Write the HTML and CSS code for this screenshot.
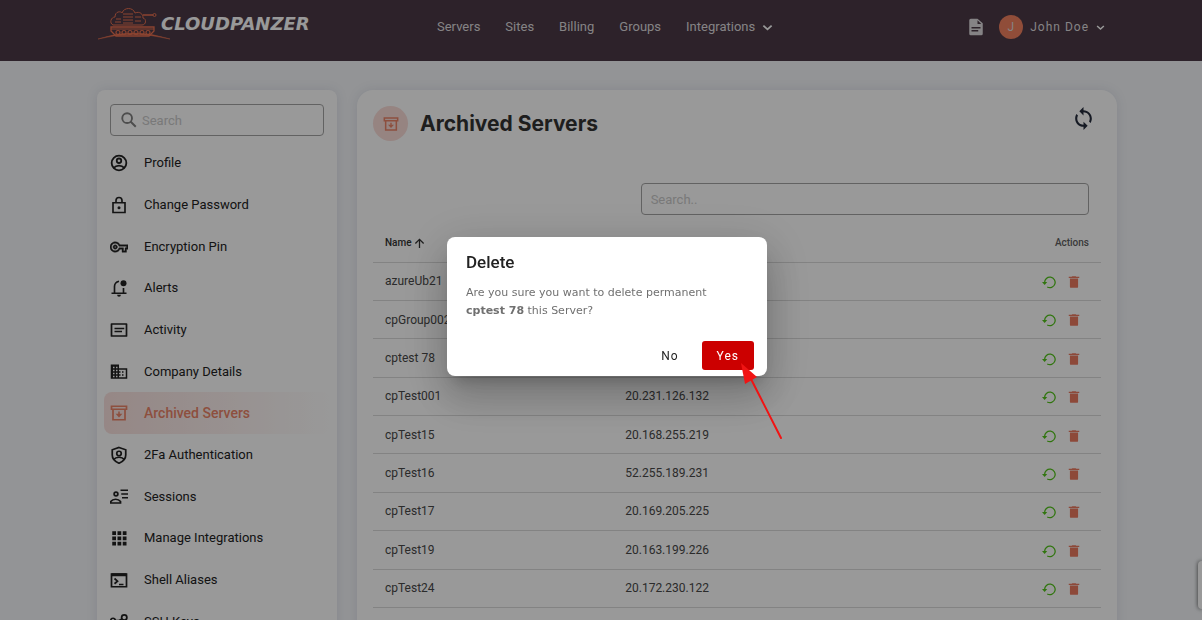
FILE: index.html
```html
<!DOCTYPE html>
<html lang="en">
<head>
<meta charset="utf-8">
<meta name="viewport" content="width=device-width, initial-scale=1">
<title>Archived Servers</title>
<link rel="stylesheet" href="styles.css">
</head>
<body>
<svg class="sprite" aria-hidden="true">
  <symbol id="i-user" viewBox="0 0 24 24"><g fill="none" stroke="currentColor" stroke-width="2.400"><circle cx="12" cy="12" r="9.800"/><circle cx="12" cy="9" r="3"/><path d="M5 18.500c3.500-4 10.500-4 14 0"/></g></symbol>
  <symbol id="i-lock" viewBox="0 0 24 24"><g fill="none" stroke="currentColor" stroke-width="2.200"><path d="M4 9h16v13H4zM8 9V6a4 4 0 0 1 8 0v3"/></g><circle cx="12" cy="15.500" r="2" fill="currentColor"/></symbol>
  <symbol id="i-key" viewBox="0 0 24 24"><path fill="currentColor" stroke="currentColor" stroke-width=".5" d="M22 19h-6v-4h-2.680c-1.140 2.420-3.600 4-6.320 4-3.860 0-7-3.140-7-7s3.140-7 7-7c2.720 0 5.170 1.580 6.320 4H24v6h-2v4zm-4-2h2v-4h2v-2H11.940l-.23-.67C11.010 8.340 9.110 7 7 7c-2.760 0-5 2.240-5 5s2.240 5 5 5c2.110 0 4.010-1.340 4.710-3.330l.23-.67H18v4zM7 15c-1.650 0-3-1.350-3-3s1.350-3 3-3 3 1.350 3 3-1.350 3-3 3zm0-4c-.55 0-1 .45-1 1s.45 1 1 1 1-.45 1-1-.45-1-1-1z"/></symbol>
  <symbol id="i-bell" viewBox="0 0 24 24"><path fill="none" stroke="currentColor" stroke-width="2.200" d="M2 19h20M6 19V10c0-3 2-6 6-7M18 19v-7"/><path fill="currentColor" d="M9.500 21h5a2.500 2.500 0 0 1-5 0z"/><circle cx="18" cy="5.500" r="4" fill="currentColor"/></symbol>
  <symbol id="i-list" viewBox="0 0 24 24"><path fill="none" stroke="currentColor" stroke-width="2.300" stroke-linejoin="round" d="M2 4h20v16H2zM6 10h13M6 14h10"/></symbol>
  <symbol id="i-building" viewBox="0 0 24 24"><path fill="currentColor" d="M12 7V2H1v19h22V7H12zM6 19H4v-2h2v2zm0-4H4v-2h2v2zm0-4H4V9h2v2zm0-4H4V5h2v2zm4 12H8v-2h2v2zm0-4H8v-2h2v2zm0-4H8V9h2v2zm0-4H8V5h2v2zm11 12h-9v-2h2v-2h-2v-2h2v-2h-2V9h9v10zm-3-8h-2v2h2v-2zm0 4h-2v2h2v-2z"/></symbol>
  <symbol id="i-archive" viewBox="0 0 24 24"><path fill="none" stroke="currentColor" stroke-width="2.300" d="M2 3h20v4H2zM4 8v13h16V8"/><path fill="currentColor" d="M11 10h2v3h3.500L12 18l-4.500-5H11z"/></symbol>
  <symbol id="i-shield" viewBox="0 0 24 24"><g fill="none" stroke="currentColor" stroke-width="2.300"><path d="M12 2l9 3v7c0 5-4 9-9 11-5-2-9-6-9-11V5z"/><circle cx="12" cy="10" r="3"/><path d="M5 18c3-4 11-4 14 0"/></g></symbol>
  <symbol id="i-session" viewBox="0 0 24 24"><g fill="none" stroke="currentColor" stroke-width="2.300"><circle cx="8" cy="8" r="2.500"/><path d="M1 20v-2c3-4 10-4 13 0v2zM14 3h10M15 8h9M16 13h8"/></g></symbol>
  <symbol id="i-apps" viewBox="0 0 24 24"><path fill="currentColor" d="M3 3h5v5H3zM10 3h5v5h-5zM17 3h5v5h-5zM3 10h5v5H3zM10 10h5v5h-5zM17 10h5v5h-5zM3 17h5v5H3zM10 17h5v5h-5zM17 17h5v5h-5z"/></symbol>
  <symbol id="i-shell" viewBox="0 0 24 24"><path fill="none" stroke="currentColor" stroke-width="2.300" d="M2 4h20v17H2zM6 10l4 3.500L6 17M12 18h6"/><path fill="currentColor" d="M2 3h20v4H2z"/></symbol>
  <symbol id="i-ssh" viewBox="0 0 24 24"><g fill="none" stroke="currentColor" stroke-width="2.300"><circle cx="19" cy="6" r="3.500"/><circle cx="4" cy="10" r="3"/><path d="M7 10h5l4-2M11 11v4M16 9l2 6"/></g></symbol>
  <symbol id="i-search" viewBox="0 0 24 24"><g fill="none" stroke="currentColor" stroke-width="2.500"><circle cx="9.500" cy="9.500" r="6.500"/><path d="M14 14l7 7"/></g></symbol>
  <symbol id="i-up" viewBox="0 0 24 24"><path fill="none" stroke="currentColor" stroke-width="2.800" d="M12 22V3M3 12l9-9 9 9"/></symbol>
  <symbol id="i-restore" viewBox="0 0 24 24"><path fill="none" stroke="currentColor" stroke-width="2.200" d="M4.500 13a9 9 0 1 1 4.500 7.500"/><path fill="currentColor" d="M0 12h9l-4.500 5z"/></symbol>
  <symbol id="i-trash" viewBox="0 0 24 24"><path fill="currentColor" d="M3 3h5l1-1h6l1 1h5v2H3zM5 6h14v14a2 2 0 0 1-2 2H7a2 2 0 0 1-2-2z"/></symbol>
  <symbol id="i-sync" viewBox="0 0 24 24"><path fill="currentColor" d="M12 4V1L8 5l4 4V6c3.310 0 6 2.690 6 6 0 1.010-.25 1.970-.7 2.800l1.460 1.460C19.540 15.030 20 13.570 20 12c0-4.420-3.580-8-8-8zm0 14c-3.310 0-6-2.690-6-6 0-1.010.25-1.970.7-2.800L5.240 7.740C4.460 8.970 4 10.430 4 12c0 4.420 3.580 8 8 8v3l4-4-4-4v3z"/></symbol>
  <symbol id="i-doc" viewBox="0 0 24 24"><path fill="currentColor" fill-rule="evenodd" d="M5 1h9l7 6v14a2 2 0 0 1-2 2H5a2 2 0 0 1-2-2V3a2 2 0 0 1 2-2zm9 2v5h5zM6 12v2h12v-2zm0 4v2h9v-2z"/></symbol>
  <symbol id="i-down" viewBox="0 0 24 24"><path fill="none" stroke="currentColor" stroke-width="4" d="M3 8l9 8 9-8"/></symbol>
</svg>

<header class="topbar">
  <a class="brand" href="#">
    <svg class="brand-mark" viewBox="0 0 74 34" fill="none" stroke="currentColor" aria-hidden="true">
      <path d="M1 32Q36 20 73 32Q36 23 1 32z" fill="currentColor" stroke-width=".5"/>
      <path d="M16 18c-4-2-2-8 2-8 0-6 6-6 7-4 2-6 11-6 13 0 5-2 8 1 8 5 4 1 3 7-1 7z"/>
      <path d="M46 8h10" stroke-width="1.500"/><circle cx="57.500" cy="8" r="1.500"/>
      <path d="M26 7h10M26 10h10M26 13h10M26 16h10M19 12h5M38 10h6M18 15h6M38 14h6"/>
      <path d="M14 20h43v4l-5 5H19l-5-5z" stroke-width="1.300"/>
      <path d="M14 22h43"/>
      <g stroke-width="1.200"><circle cx="21" cy="25.500" r="2"/><circle cx="27" cy="25.500" r="2"/><circle cx="33" cy="25.500" r="2"/><circle cx="39" cy="25.500" r="2"/><circle cx="45" cy="25.500" r="2"/><circle cx="51" cy="25.500" r="2"/></g>
    </svg>
    <span class="brand-name">CLOUDPANZER</span>
  </a>
  <nav class="mainnav">
    <a href="#">Servers</a>
    <a href="#">Sites</a>
    <a href="#">Billing</a>
    <a href="#">Groups</a>
    <a href="#">Integrations <svg class="chev"><use href="#i-down"/></svg></a>
  </nav>
  <div class="account">
    <a href="#" aria-label="Documentation"><svg class="icon"><use href="#i-doc"/></svg></a>
    <button class="user" type="button"><span class="avatar">J</span><span>John Doe</span><svg class="chev chev-small"><use href="#i-down"/></svg></button>
  </div>
</header>

<div class="layout">
  <aside class="card sidebar">
    <label class="field side-search"><svg class="icon"><use href="#i-search"/></svg><input type="search" placeholder="Search" aria-label="Search settings"></label>
    <nav class="menu">
      <a href="#"><svg class="icon"><use href="#i-user"/></svg>Profile</a>
      <a href="#"><svg class="icon"><use href="#i-lock"/></svg>Change Password</a>
      <a href="#"><svg class="icon"><use href="#i-key"/></svg>Encryption Pin</a>
      <a href="#"><svg class="icon"><use href="#i-bell"/></svg>Alerts</a>
      <a href="#"><svg class="icon"><use href="#i-list"/></svg>Activity</a>
      <a href="#"><svg class="icon"><use href="#i-building"/></svg>Company Details</a>
      <a href="#" class="active"><svg class="icon"><use href="#i-archive"/></svg>Archived Servers</a>
      <a href="#"><svg class="icon"><use href="#i-shield"/></svg>2Fa Authentication</a>
      <a href="#"><svg class="icon"><use href="#i-session"/></svg>Sessions</a>
      <a href="#"><svg class="icon"><use href="#i-apps"/></svg>Manage Integrations</a>
      <a href="#"><svg class="icon"><use href="#i-shell"/></svg>Shell Aliases</a>
      <a href="#"><svg class="icon"><use href="#i-ssh"/></svg>SSH Keys</a>
    </nav>
  </aside>

  <main class="card content">
    <div class="heading">
      <span class="badge"><svg class="badge-icon"><use href="#i-archive"/></svg></span>
      <h1>Archived Servers</h1>
      <button class="refresh" type="button" aria-label="Refresh"><svg><use href="#i-sync"/></svg></button>
    </div>
    <label class="field table-search"><input type="search" placeholder="Search.." aria-label="Search servers"></label>
    <table class="servers">
      <thead><tr><th class="name">Name <svg class="sort"><use href="#i-up"/></svg></th><th></th><th class="actions">Actions</th></tr></thead>
      <tbody>
        <tr><td>azureUb21</td><td></td><td class="actions"><button class="restore" type="button" aria-label="Restore"><svg><use href="#i-restore"/></svg></button><button class="remove" type="button" aria-label="Delete"><svg><use href="#i-trash"/></svg></button></td></tr>
        <tr><td>cpGroup002</td><td></td><td class="actions"><button class="restore" type="button" aria-label="Restore"><svg><use href="#i-restore"/></svg></button><button class="remove" type="button" aria-label="Delete"><svg><use href="#i-trash"/></svg></button></td></tr>
        <tr><td>cptest 78</td><td></td><td class="actions"><button class="restore" type="button" aria-label="Restore"><svg><use href="#i-restore"/></svg></button><button class="remove" type="button" aria-label="Delete"><svg><use href="#i-trash"/></svg></button></td></tr>
        <tr><td>cpTest001</td><td>20.231.126.132</td><td class="actions"><button class="restore" type="button" aria-label="Restore"><svg><use href="#i-restore"/></svg></button><button class="remove" type="button" aria-label="Delete"><svg><use href="#i-trash"/></svg></button></td></tr>
        <tr><td>cpTest15</td><td>20.168.255.219</td><td class="actions"><button class="restore" type="button" aria-label="Restore"><svg><use href="#i-restore"/></svg></button><button class="remove" type="button" aria-label="Delete"><svg><use href="#i-trash"/></svg></button></td></tr>
        <tr><td>cpTest16</td><td>52.255.189.231</td><td class="actions"><button class="restore" type="button" aria-label="Restore"><svg><use href="#i-restore"/></svg></button><button class="remove" type="button" aria-label="Delete"><svg><use href="#i-trash"/></svg></button></td></tr>
        <tr><td>cpTest17</td><td>20.169.205.225</td><td class="actions"><button class="restore" type="button" aria-label="Restore"><svg><use href="#i-restore"/></svg></button><button class="remove" type="button" aria-label="Delete"><svg><use href="#i-trash"/></svg></button></td></tr>
        <tr><td>cpTest19</td><td>20.163.199.226</td><td class="actions"><button class="restore" type="button" aria-label="Restore"><svg><use href="#i-restore"/></svg></button><button class="remove" type="button" aria-label="Delete"><svg><use href="#i-trash"/></svg></button></td></tr>
        <tr><td>cpTest24</td><td>20.172.230.122</td><td class="actions"><button class="restore" type="button" aria-label="Restore"><svg><use href="#i-restore"/></svg></button><button class="remove" type="button" aria-label="Delete"><svg><use href="#i-trash"/></svg></button></td></tr>
      </tbody>
    </table>
  </main>
</div>

<div class="side-tab"></div>

<div class="overlay">
  <div class="dialog" role="dialog" aria-modal="true" aria-labelledby="dialog-title">
    <h2 id="dialog-title">Delete</h2>
    <p>Are you sure you want to delete permanent <strong>cptest 78</strong> this Server?</p>
    <div class="dialog-actions">
      <button class="btn" type="button">No</button>
      <button class="btn btn-danger" type="button">Yes</button>
    </div>
    <svg class="pointer" viewBox="0 0 44 80" aria-hidden="true"><path d="M10 16L40 75" stroke="#f01414" stroke-width="2" stroke-linecap="round"/><path d="M0 0L16 14L4 21z" fill="#f01414"/></svg>
  </div>
</div>
</body>
</html>
```

FILE: styles.css
```css
* { box-sizing: border-box; }

body {
  margin: 0;
  height: 100vh;
  overflow: hidden;
  background: #f5f7fa;
  color: #222;
  font: 13px/16px Roboto, "Liberation Sans", sans-serif;
}

a { color: inherit; text-decoration: none; }
button { font: inherit; color: inherit; background: none; border: 0; padding: 0; cursor: pointer; }
svg { display: block; flex: none; }
.sprite { position: absolute; width: 0; height: 0; }
.icon { width: 18px; height: 18px; }

.topbar {
  display: grid;
  grid-template-columns: 340px 1fr auto;
  align-items: center;
  padding: 0 97px 7px 97px;
  height: 61px;
  background: #4b3a46;
  color: #dedade;
}
.brand { display: flex; align-items: center; padding-bottom: 6px; }
.brand-mark { width: 74px; height: 34px; margin-right: -10px; color: #e87050; }
.brand-name { font: italic bold 18px/20px "DejaVu Sans", sans-serif; color: #fff; }
.mainnav { display: flex; gap: 25px; }
.mainnav a { display: flex; align-items: center; gap: 7px; }
.chev { width: 11px; height: 11px; color: #fff; }
.chev-small { width: 9px; height: 9px; }
.account { display: flex; align-items: center; gap: 14px; }
.user { display: flex; align-items: center; gap: 7px; font-size: 12px; letter-spacing: 1px; }
.avatar {
  display: grid;
  place-items: center;
  width: 24px;
  height: 24px;
  border-radius: 50%;
  background: #f08060;
}

.layout {
  display: grid;
  grid-template-columns: 240px minmax(0, 1fr);
  gap: 20px;
  padding: 29px 85px 29px 97px;
}
.card { background: #fff; box-shadow: 0 0 12px rgba(60, 60, 110, .12); }
.sidebar { border-radius: 8px; padding: 14px 13px; }
.content { border-radius: 16px; padding: 16px; }

.field {
  display: flex;
  align-items: center;
  height: 32px;
  border: 1px solid #a4a4a4;
  border-radius: 4px;
  padding: 0 9px;
}
.field .icon { color: #808080; margin-right: 4px; }
.field input {
  flex: 1;
  min-width: 0;
  border: 0;
  padding: 1px 0 0;
  outline: 0;
  background: none;
  font: inherit;
}
.field input::placeholder { color: #cacaca; opacity: 1; }

.menu {
  display: grid;
  grid-auto-rows: 1fr;
  height: 500px;
  margin: 6px -6px 0;
}
.menu a {
  display: flex;
  align-items: center;
  gap: 16px;
  padding: 1px 0 0 6px;
  border-radius: 8px;
}
.menu .active {
  color: #ec8468;
  font-size: 14px;
  font-weight: 500;
  background: linear-gradient(90deg, #fae2df, #fff);
}

.heading { display: flex; align-items: center; gap: 12px; }
.heading h1 { flex: 1; margin: 0; color: #333; font: 700 21px/28px Inter, sans-serif; }
.badge {
  display: grid;
  place-items: center;
  width: 35px;
  height: 35px;
  border-radius: 50%;
  background: #fadcd8;
  color: #ec8468;
}
.badge-icon { width: 16px; height: 16px; }
.refresh { margin: 0 5px 10px 0; color: #252c3c; }
.refresh svg { width: 25px; height: 25px; }
.table-search { width: calc(62% - 3px); margin: 42px 12px 0 auto; }

.servers {
  width: 100%;
  height: 393px;
  border-collapse: collapse;
  table-layout: fixed;
  font-size: 12px;
  color: #484848;
}
.servers th { height: 47px; padding: 10px 12px 0; color: #606060; font-size: 10px; font-weight: 500; text-align: left; }
.servers th:first-child { width: 33%; color: #333; }
.servers td { padding: 0 12px; }
.servers tr { border-bottom: 1px solid #dadada; }
.servers .actions { text-align: right; }
.servers td.actions { padding-right: 20px; }
.servers td button { vertical-align: middle; }
.sort { display: inline-block; width: 11px; height: 11px; vertical-align: -3px; }
.restore { color: #52c41a; }
.remove { color: #ec7a60; margin-left: 11px; }
.restore svg, .remove svg { width: 14px; height: 14px; }

.side-tab {
  position: fixed;
  right: 0;
  bottom: 11px;
  width: 4px;
  height: 48px;
  background: #fff;
  border-radius: 4px 0 0 4px;
  box-shadow: 0 0 4px rgba(0, 0, 0, .7);
}

.overlay {
  position: fixed;
  inset: 0;
  display: grid;
  place-items: center;
  padding: 0 0 7px 12px;
  background: rgba(0, 0, 0, .4);
}
.dialog {
  position: relative;
  width: 320px;
  padding: 15px 13px 6px 19px;
  border-radius: 8px;
  background: #fff;
  box-shadow: 0 11px 15px -7px rgba(0, 0, 0, .2), 0 24px 38px 3px rgba(0, 0, 0, .14), 0 9px 46px 8px rgba(0, 0, 0, .12);
}
.dialog h2 { margin: 0 0 12px; font-size: 17px; line-height: 20px; font-weight: 500; }
.dialog p { margin: 0; padding-right: 25px; color: #707070; font: 11px/18px "DejaVu Sans", sans-serif; }
.dialog-actions { display: flex; justify-content: flex-end; gap: 8px; margin-top: 21px; }
.btn { height: 29px; padding: 0 15px; border-radius: 3px; font-size: 12px; letter-spacing: 1px; }
.btn-danger { background: #c00; color: #fff; }
.pointer { position: absolute; left: 294px; top: 126px; width: 44px; height: 80px; }
```
